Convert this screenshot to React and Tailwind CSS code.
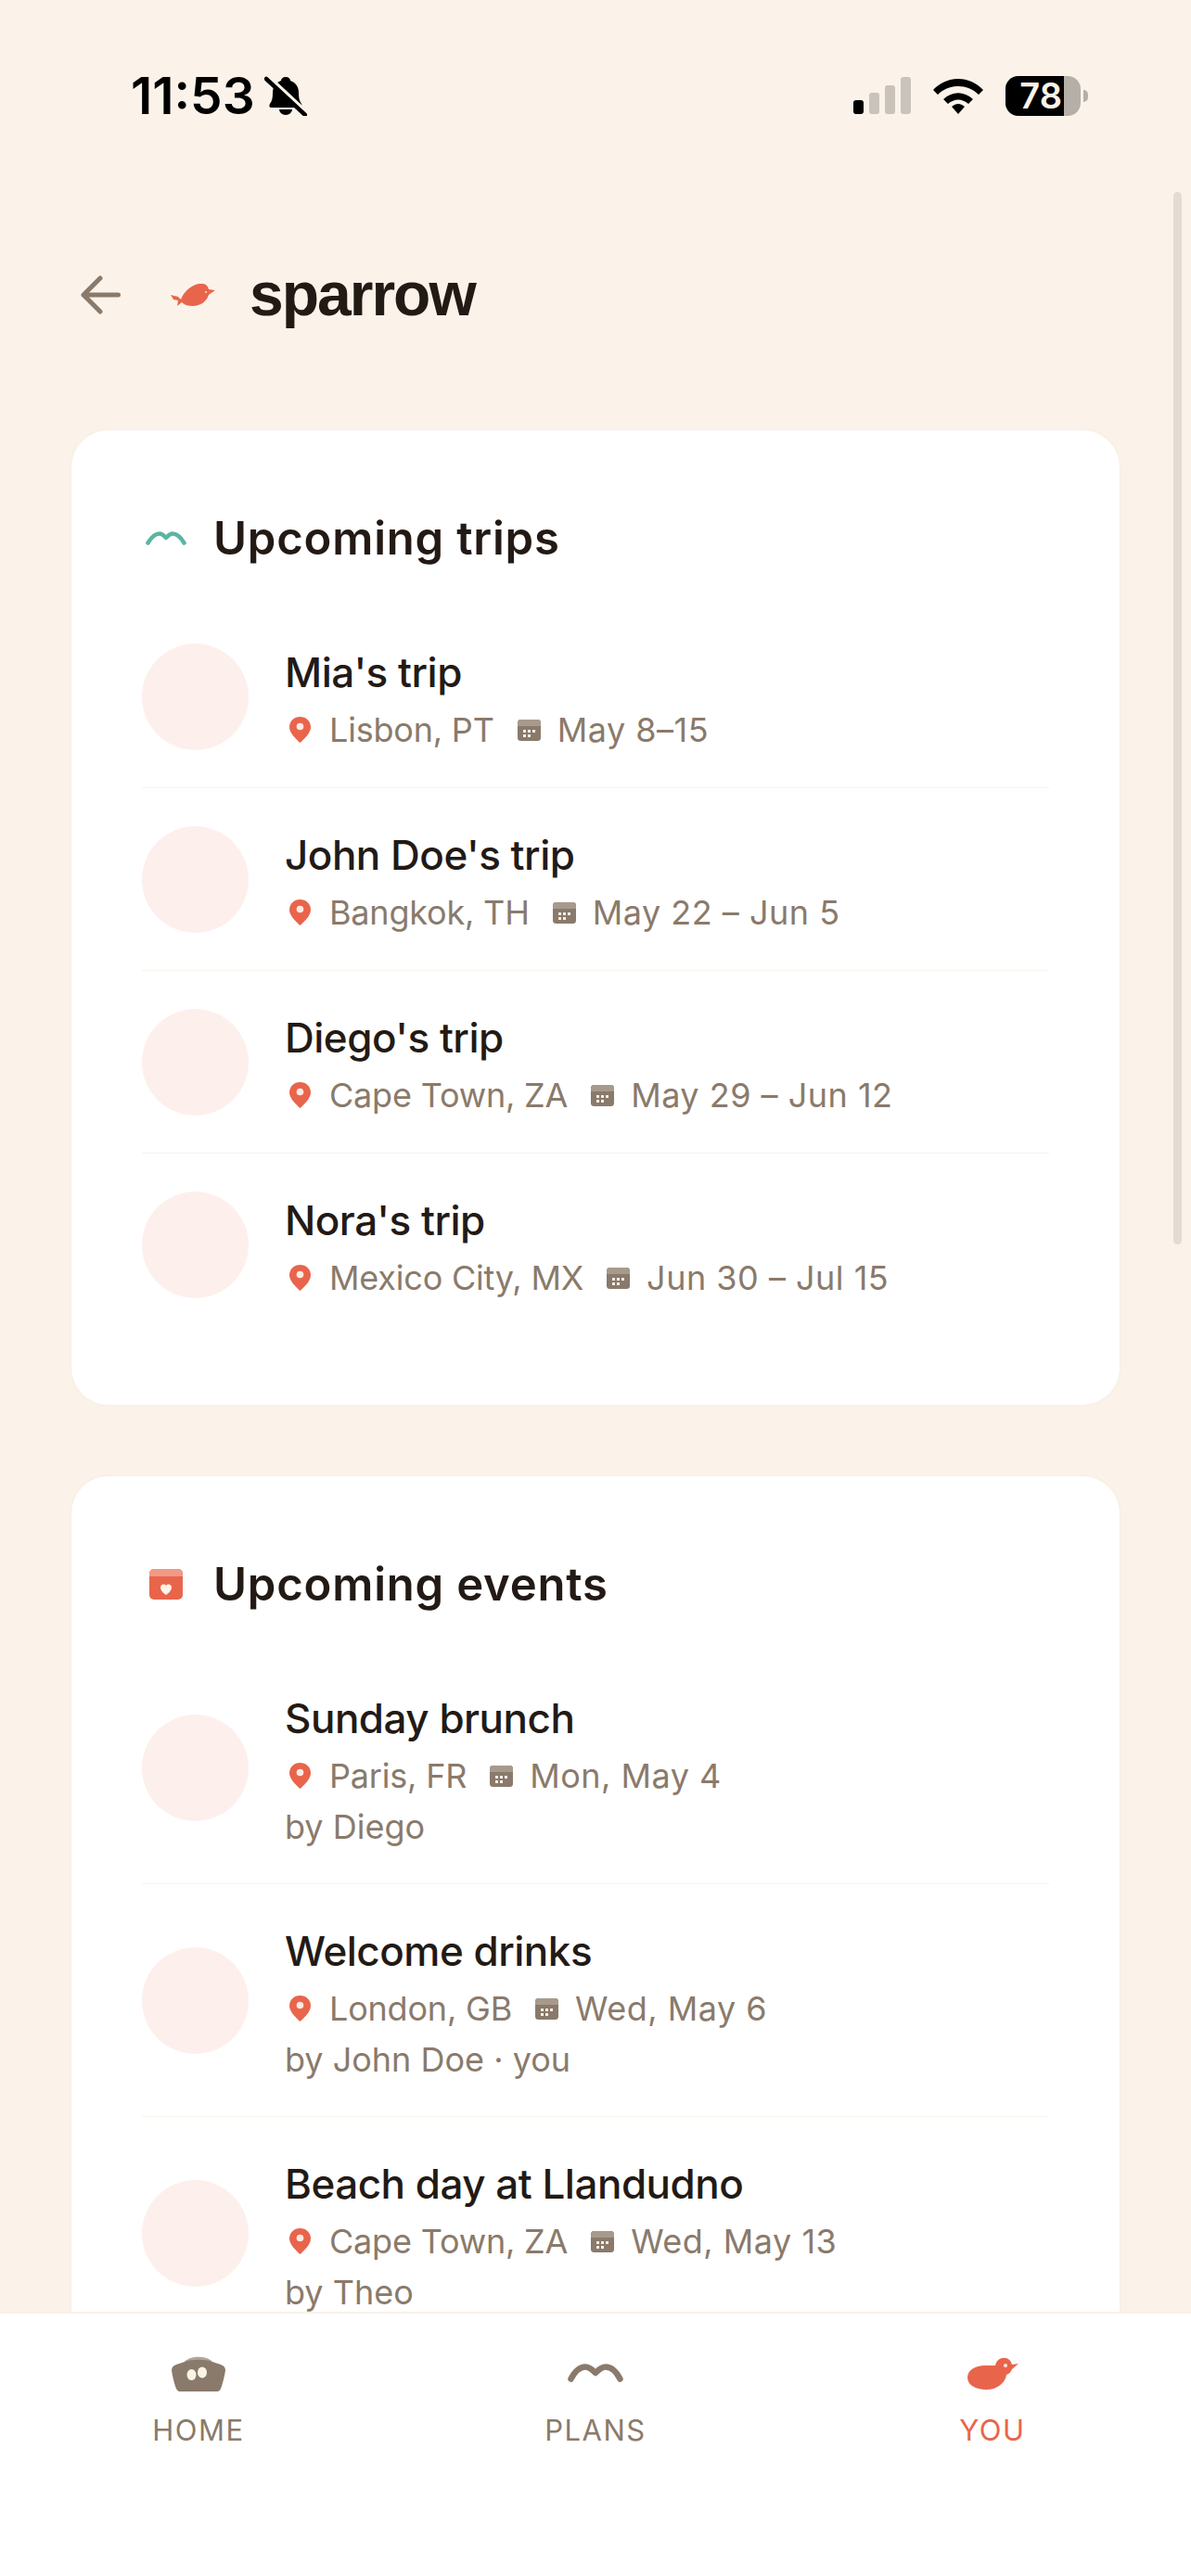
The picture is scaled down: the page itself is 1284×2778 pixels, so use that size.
import React from "react";

const trips = [
  { name: "Mia's trip", place: "Lisbon, PT", date: "May 8–15" },
  { name: "John Doe's trip", place: "Bangkok, TH", date: "May 22 – Jun 5" },
  { name: "Diego's trip", place: "Cape Town, ZA", date: "May 29 – Jun 12" },
  { name: "Nora's trip", place: "Mexico City, MX", date: "Jun 30 – Jul 15" },
];

const events = [
  { name: "Sunday brunch", place: "Paris, FR", date: "Mon, May 4", by: "by Diego" },
  { name: "Welcome drinks", place: "London, GB", date: "Wed, May 6", by: "by John Doe · you" },
  { name: "Beach day at Llandudno", place: "Cape Town, ZA", date: "Wed, May 13", by: "by Theo" },
];

const PinIcon = () => (
  <svg width="23" height="28" viewBox="0 0 23 28" className="ml-[5px] shrink-0">
    <path d="M11.5 0C5 0 0 4.8 0 11c0 6.4 7 13 11.5 17C16 24 23 17.4 23 11 23 4.8 18 0 11.5 0Z" fill="#E8654C" />
    <circle cx="11.5" cy="10.5" r="3.8" fill="#FDE9E2" />
  </svg>
);

const CalendarIcon = () => (
  <svg width="25" height="23" viewBox="0 0 25 23" className="shrink-0">
    <rect width="25" height="23" rx="3.5" fill="#8A7A6B" />
    <path d="M0 7V3.5A3.5 3.5 0 0 1 3.5 0h18A3.5 3.5 0 0 1 25 3.5V7Z" fill="#A79A8D" />
    <g fill="#F6EFE8">
      <rect x="6" y="11" width="3" height="3" />
      <rect x="11" y="11" width="3" height="3" />
      <rect x="16" y="11" width="3" height="3" />
      <rect x="6" y="16" width="3" height="3" />
      <rect x="11" y="16" width="3" height="3" />
    </g>
  </svg>
);

const Row = ({ item, last }) => (
  <div className={`flex items-center gap-[39px] py-[34px] ${last ? "" : "border-b border-[#F8F3EA]"}`}>
    <div className="w-[115px] h-[115px] rounded-full bg-[#FDF0EC] shrink-0" />
    <div className="min-w-0 pt-[10px]">
      <div className="text-[44px] leading-[56px] font-medium text-[#231A15] tracking-[-0.5px]">{item.name}</div>
      <div className="flex items-center mt-1.5 text-[36px] leading-[56px] text-[#8A7A6B]">
        <PinIcon />
        <span className="ml-[20px] tracking-[-0.2px]">{item.place}</span>
        <span className="ml-[25px]"><CalendarIcon /></span>
        <span className="ml-[18px] tracking-[0.5px]">{item.date}</span>
      </div>
      {item.by && <div className="text-[36px] leading-[54px] text-[#8A7A6B]">{item.by}</div>}
    </div>
  </div>
);

const Card = ({ icon, title, items }) => (
  <section className="mx-[77px] bg-white rounded-[40px] px-[76px] pt-[76px] pb-[75px] shadow-[0_0_4px_rgba(120,90,60,0.05)]">
    <div className="flex items-center h-[80px] mb-[33px]">
      <div className="w-[51px] mr-[26px] flex justify-center">{icon}</div>
      <h2 className="text-[49px] font-semibold text-[#231A15] tracking-[0.8px] leading-none">{title}</h2>
    </div>
    {items.map((item, i) => (
      <Row key={item.name} item={item} last={i === items.length - 1} />
    ))}
  </section>
);

const NavItem = ({ icon, label, active }) => (
  <div className="flex flex-col items-center">
    <div className="h-[60px] mt-1 flex items-center justify-center">{icon}</div>
    <span className={`mt-[12px] text-[31px] leading-[40px] tracking-[1.5px] ${active ? "text-[#E8654C]" : "text-[#8A7A6B]"}`}>
      {label}
    </span>
  </div>
);

export default function App() {
  return (
    <div
      className="relative h-screen overflow-hidden bg-[#FBF3EA]"
      style={{ fontFamily: "Inter, 'Liberation Sans', sans-serif" }}
    >
      {/* Barra de estado */}
      <div className="flex items-center justify-between h-[206px] pl-[141px] pr-[111px]">
        <div className="flex items-center gap-[10px]">
          <span className="text-[55px] font-semibold leading-none text-black">11:53</span>
          <svg width="46" height="44" viewBox="0 0 46 44">
            <path d="M23 2c-3 0-5 2-5 4-6 2-9 7-9 13 0 6-1 9-3 12-1 2-1 4 2 4h30c3 0 3-2 2-4-2-3-3-6-3-12 0-6-3-11-9-13 0-2-2-4-5-4Z" fill="#000" />
            <path d="M16 37a7 6 0 0 0 14 0Z" fill="#000" />
            <path d="M2 0l42 39" stroke="#FBF3EA" strokeWidth="5" />
            <path d="M2 4l42 39" stroke="#000" strokeWidth="4.5" strokeLinecap="round" />
          </svg>
        </div>
        <div className="flex items-center">
          <svg width="62" height="40" viewBox="0 0 62 40">
            <rect x="0" y="25" width="11" height="15" rx="3" fill="#000" />
            <rect x="17" y="17" width="11" height="23" rx="3" fill="#C9C3BB" />
            <rect x="34" y="9" width="11" height="31" rx="3" fill="#C9C3BB" />
            <rect x="51" y="0" width="11" height="40" rx="3" fill="#C9C3BB" />
          </svg>
          <svg width="54" height="40" viewBox="0 0 54 40" className="ml-6">
            <path d="M0 14C15-2 39-2 54 14l-5 5C37 7 17 7 5 19Z" fill="#000" />
            <path d="M11 24c10-9 22-9 32 0l-5 5c-7-6-15-6-22 0Z" fill="#000" />
            <path d="M20 32c5-4 9-4 14 0l-7 8Z" fill="#000" />
          </svg>
          <div className="relative ml-6 w-[81px] h-[43px] rounded-[14px] overflow-hidden bg-[#B5AFA7] flex">
            <div className="w-[63px] bg-black flex items-center justify-end pr-[2px]">
              <span className="text-[#FBF3EA] text-[38px] font-semibold leading-none">78</span>
            </div>
          </div>
          <div className="ml-[3px] w-[5px] h-[13px] rounded-r-full bg-[#B5AFA7]" />
        </div>
      </div>

      {/* Encabezado */}
      <header className="flex items-center h-[258px] pl-[87px] pb-[34px]">
        <svg width="43" height="42" viewBox="0 0 43 42" fill="none" stroke="#8A7A6B" strokeWidth="5" strokeLinecap="round" strokeLinejoin="round">
          <path d="M40.5 21H3M21 3 3 21l18 18" />
        </svg>
        <svg width="48" height="24" viewBox="0 0 48 24" className="ml-[54px]">
          <path d="M0 12l8 2 3 3c3-8 10-15 19-17 6-1 10 1 11 6l7 1-7 5c-2 7-9 12-17 12-5 0-9-1-12-4l-5 4 1-6-5-1Z" fill="#E8654C" />
          <circle cx="38" cy="9" r="1" fill="#FDE9E2" />
        </svg>
        <span
          className="ml-[37px] -mt-[3px] text-[66px] font-bold text-[#231A15] tracking-[-2px] leading-none"
          style={{ fontFamily: "'Liberation Sans', Arial, sans-serif" }}
        >
          sparrow
        </span>
      </header>

      <main className="flex flex-col gap-[77px]">
        <Card
          title="Upcoming trips"
          items={trips}
          icon={
            <svg width="44" height="15" viewBox="0 0 44 15" fill="none" stroke="#5BB5A2" strokeWidth="4.5" strokeLinecap="round" strokeLinejoin="round">
              <path d="M2.500 12.500C7 5 11 2.500 15 2.500 18 2.500 20 5 22 7 24 5 26 2.500 29 2.500 33 2.500 37 5 41.500 12.500" />
            </svg>
          }
        />
        <Card
          title="Upcoming events"
          items={events}
          icon={
            <svg width="36" height="33" viewBox="0 0 36 33">
              <rect width="36" height="33" rx="5" fill="#E8654C" />
              <path d="M0 8V5a5 5 0 0 1 5-5h26a5 5 0 0 1 5 5v3Z" fill="#F09A85" />
              <path d="M18 28c-3-2-6-5-6-8 0-2 1.500-3.500 3.500-3.500 1 0 2 .5 2.500 1.500.5-1 1.500-1.500 2.500-1.500 2 0 3.500 1.500 3.500 3.500 0 3-3 6-6 8Z" fill="#FDF3E7" />
            </svg>
          }
        />
      </main>

      {/* Barra de scroll */}
      <div className="absolute top-[207px] right-[10px] w-[9px] h-[1135px] rounded-full bg-[#E2DCD4]" />

      {/* Navegación inferior */}
      <nav className="absolute left-0 right-0 bottom-0 h-[285px] bg-white border-t-2 border-[#F8F1EA] grid grid-cols-3 pt-[30px]">
        <NavItem
          label="HOME"
          icon={
            <svg width="58" height="39" viewBox="0 0 58 39">
              <path d="M14 7C20 2 38 2 44 7l9 3c3 1 5 3 5 6-1 7-3 15-5 20-1 2-2 3-4 3H9c-2 0-3-1-4-3-2-5-4-13-5-20 0-3 2-5 5-6Z" fill="#8A7A6B" />
              <path d="M14 7C20 0 38 0 44 7 36 4 22 4 14 7Z" fill="#B0A59A" />
              <ellipse cx="21.500" cy="21" rx="5" ry="6" fill="#FBF3E6" />
              <ellipse cx="33" cy="18.500" rx="5" ry="6" fill="#FBF3E6" />
            </svg>
          }
        />
        <NavItem
          label="PLANS"
          icon={
            <svg width="60" height="20" viewBox="0 0 60 20" fill="none" stroke="#8A7A6B" strokeWidth="6.500" strokeLinecap="round" strokeLinejoin="round">
              <path d="M3.500 16.500C8 8 13 3.500 19 3.500 24 3.500 27 7 30 10 33 7 36 3.500 41 3.500 47 3.500 52 8 56.500 16.500" />
            </svg>
          }
        />
        <NavItem
          active
          label="YOU"
          icon={
            <svg width="55" height="35" viewBox="0 0 55 35">
              <path d="M30 9c1-5 5-9 11-8 3 0 6 3 7 7l7-1-7 6c-1 3-3 5-6 6-1 8-9 16-22 16C9 35 0 30 0 22 0 14 9 9 18 9Z" fill="#E8654C" />
              <circle cx="41" cy="9" r="2" fill="#FDE9E2" />
            </svg>
          }
        />
      </nav>
    </div>
  );
}
